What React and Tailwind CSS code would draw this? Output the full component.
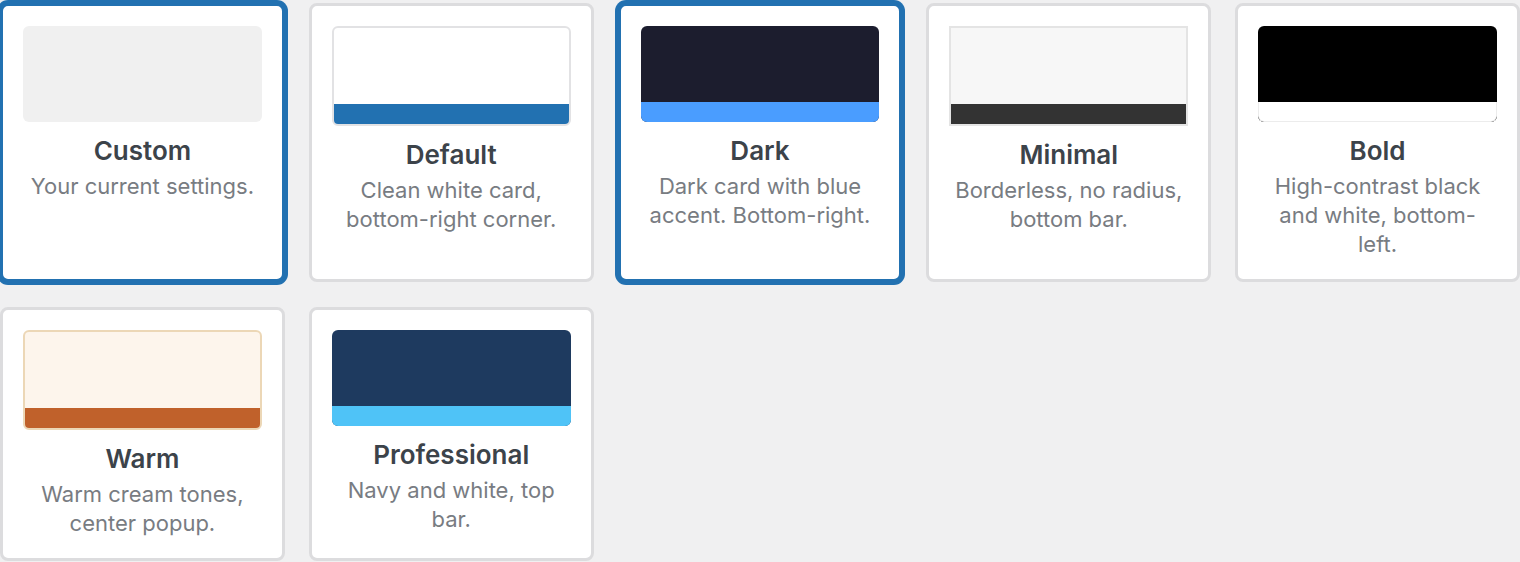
const presets = [
  {
    name: 'Custom',
    desc: 'Your current settings.',
    selected: true,
    preview: 'h-[96px] rounded-md bg-[#f0f0f0]',
    bar: null,
  },
  {
    name: 'Default',
    desc: 'Clean white card, bottom-right corner.',
    preview: 'h-[100px] rounded-md border-2 border-[#e2e2e4] bg-white',
    bar: 'bg-[#2271b1]',
  },
  {
    name: 'Dark',
    desc: 'Dark card with blue accent. Bottom-right.',
    selected: true,
    preview: 'h-[96px] rounded-md bg-[#1c1d2e]',
    bar: 'bg-[#4a9dff]',
  },
  {
    name: 'Minimal',
    desc: 'Borderless, no radius, bottom bar.',
    preview: 'h-[100px] border-2 border-[#e4e4e4] bg-[#f7f7f7]',
    bar: 'bg-[#333333]',
  },
  {
    name: 'Bold',
    desc: 'High-contrast black and white, bottom-left.',
    preview: 'h-[96px] rounded-md bg-black',
    bar: 'bg-white border-x border-b border-[#ececec] rounded-b-md',
  },
  {
    name: 'Warm',
    desc: 'Warm cream tones, center popup.',
    preview: 'h-[100px] rounded-md border-2 border-[#ecd7b6] bg-[#fdf5ec]',
    bar: 'bg-[#c0612b]',
  },
  {
    name: 'Professional',
    desc: 'Navy and white, top bar.',
    preview: 'h-[96px] rounded-md bg-[#1e3a5f]',
    bar: 'bg-[#4fc3f7]',
  },
]

function PresetCard({ preset }) {
  return (
    <button
      type="button"
      className={
        preset.selected
          ? 'flex flex-col items-stretch rounded-lg border-[3px] border-[#2271b1] bg-white p-5 text-center shadow-[0_0_0_3px_#2271b1]'
          : 'flex flex-col items-stretch rounded-lg border-[3px] border-[#dcdcde] bg-white p-5 text-center'
      }
    >
      <div className={`flex flex-col overflow-hidden ${preset.preview}`}>
        <div className="flex-1" />
        {preset.bar && <div className={`h-5 ${preset.bar}`} />}
      </div>
      <div className="mt-[14px] text-[26px] leading-[30px] font-semibold text-[#3c434a]">
        {preset.name}
      </div>
      <div className="mt-[6px] px-[5px] text-[22px] leading-[29px] text-[#787c82]">
        {preset.desc}
      </div>
    </button>
  )
}

export default function App() {
  return (
    <div
      className="min-h-screen bg-[#f0f0f1] pt-[3px]"
      style={{ fontFamily: 'Inter, "Noto Sans", sans-serif' }}
    >
      <div className="grid grid-cols-5 items-stretch gap-x-6 gap-y-[25px]">
        {presets.map(p => (
          <PresetCard key={p.name} preset={p} />
        ))}
      </div>
    </div>
  )
}
